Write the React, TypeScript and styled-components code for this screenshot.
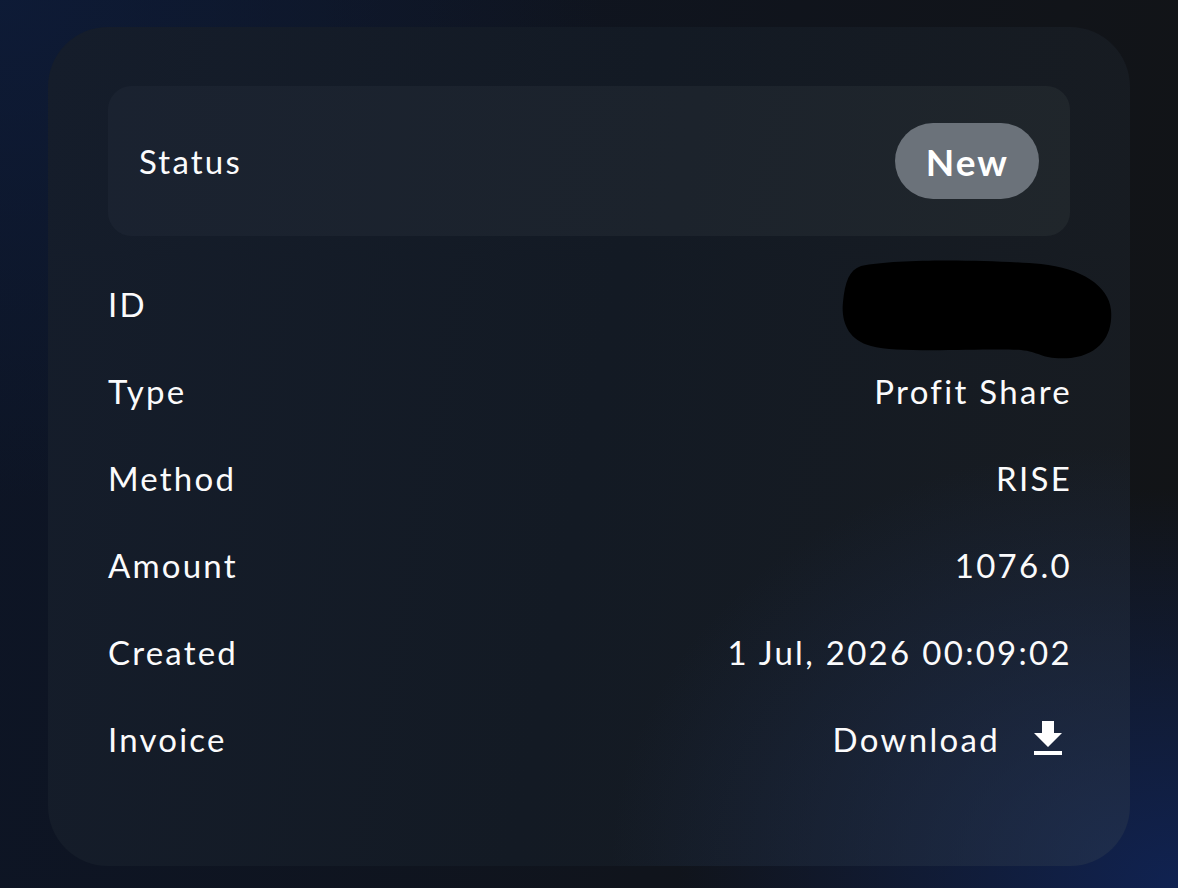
import React from 'react';
import styled, { createGlobalStyle } from 'styled-components';

const GlobalStyle = createGlobalStyle`
    html, body {
        margin: 0;
        padding: 0;
        height: 100%;
    }
    body {
        font-family: Lato, "Noto Sans", sans-serif;
        color: #fff;
    }
`;

const Page = styled.div`
    width: 1178px;
    height: 888px;
    box-sizing: border-box;
    padding: 27px 48px 22px 48px;
    background:
        radial-gradient(ellipse 500px 400px at 1178px 888px, rgba(16, 36, 88, 0.9), transparent),
        radial-gradient(ellipse 600px 500px at 0 0, rgba(14, 28, 58, 0.8), transparent),
        linear-gradient(100deg, #0d1526 0%, #10141c 60%, #121416 100%);
`;

const Card = styled.div`
    height: 100%;
    box-sizing: border-box;
    border-radius: 60px;
    padding: 59px 60px 0 60px;
    display: flex;
    flex-direction: column;
    background:
        radial-gradient(ellipse 520px 420px at 100% 100%, rgba(32, 52, 96, 0.7), transparent),
        linear-gradient(100deg, #151d2b 0%, #131a24 50%, #181c21 100%);
`;

const StatusBox = styled.div`
    height: 150px;
    box-sizing: border-box;
    border-radius: 24px;
    padding: 0 31px 0 31px;
    display: flex;
    align-items: center;
    justify-content: space-between;
    background: linear-gradient(100deg, #1a2230 0%, #1c232c 60%, #20262b 100%);
    margin-bottom: 24px;
`;

const Label = styled.span`
    font-size: 33px;
    letter-spacing: 2.2px;
    color: #fbfbfc;
`;

const Badge = styled.span`
    height: 76px;
    padding: 0 30px 0 31px;
    border-radius: 38px;
    background: #6b727a;
    display: flex;
    align-items: center;
    font-size: 37px;
    font-weight: 700;
    letter-spacing: 2px;
    color: #fff;
`;

const Row = styled.div`
    height: 87px;
    display: flex;
    align-items: center;
    justify-content: space-between;
    position: relative;
`;

const Value = styled.span`
    font-size: 33px;
    letter-spacing: 2.3px;
    color: #fbfbfc;
    display: flex;
    align-items: center;
    gap: 24px;
    margin-right: -2px;
`;

const Redaction = styled.svg`
    position: absolute;
    right: -43px;
    top: -2px;
`;

const DownloadIcon = () => (
    <svg width="48" height="48" viewBox="0 0 24 24" fill="#fff">
        <path d="M19 9h-4V3H9v6H5l7 7 7-7zM5 18v2h14v-2H5z" />
    </svg>
);

const rows: { label: string; value: string }[] = [
    { label: 'Type', value: 'Profit Share' },
    { label: 'Method', value: 'RISE' },
    { label: 'Amount', value: '1076.0' },
    { label: 'Created', value: '1 Jul, 2026 00:09:02' },
];

const App = () => {
    return (
        <Page>
            <GlobalStyle />
            <Card>
                <StatusBox>
                    <Label>Status</Label>
                    <Badge>New</Badge>
                </StatusBox>
                <Row>
                    <Label>ID</Label>
                    <Redaction width="272" height="102" viewBox="0 0 272 102">
                        <path
                            d="M20 8 C60 0 150 2 200 6 C240 10 268 28 270 52 C272 74 262 96 230 100 C200 102 200 94 180 92 C140 90 60 96 30 88 C6 82 0 62 2 44 C4 24 8 12 20 8 Z"
                            fill="#000"
                        />
                    </Redaction>
                </Row>
                {rows.map((r) => (
                    <Row key={r.label}>
                        <Label>{r.label}</Label>
                        <Value>{r.value}</Value>
                    </Row>
                ))}
                <Row>
                    <Label>Invoice</Label>
                    <Value>
                        Download
                        <DownloadIcon />
                    </Value>
                </Row>
            </Card>
        </Page>
    );
};

export default App;
